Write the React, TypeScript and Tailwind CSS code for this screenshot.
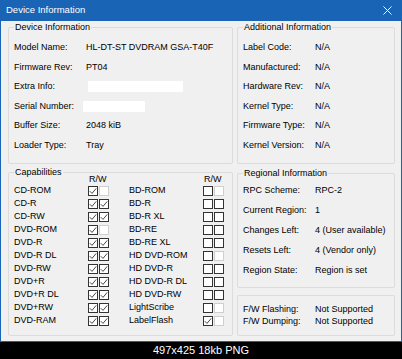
import React from "react";

const deviceRows: [string, string][] = [
  ["Model Name:", "HL-DT-ST DVDRAM GSA-T40F"],
  ["Firmware Rev:", "PT04"],
  ["Extra Info:", ""],
  ["Serial Number:", ""],
  ["Buffer Size:", "2048 kiB"],
  ["Loader Type:", "Tray"],
];

const additionalRows: [string, string][] = [
  ["Label Code:", "N/A"],
  ["Manufactured:", "N/A"],
  ["Hardware Rev:", "N/A"],
  ["Kernel Type:", "N/A"],
  ["Firmware Type:", "N/A"],
  ["Kernel Version:", "N/A"],
];

const regionalRows: [string, string][] = [
  ["RPC Scheme:", "RPC-2"],
  ["Current Region:", "1"],
  ["Changes Left:", "4 (User available)"],
  ["Resets Left:", "4 (Vendor only)"],
  ["Region State:", "Region is set"],
];

// box state: 0 = empty, 1 = checked, 2 = disabled
type Cap = [string, number, number];

const leftCaps: Cap[] = [
  ["CD-ROM", 1, 2],
  ["CD-R", 1, 1],
  ["CD-RW", 1, 1],
  ["DVD-ROM", 1, 2],
  ["DVD-R", 1, 1],
  ["DVD-R DL", 1, 1],
  ["DVD-RW", 1, 1],
  ["DVD+R", 1, 1],
  ["DVD+R DL", 1, 1],
  ["DVD+RW", 1, 1],
  ["DVD-RAM", 1, 1],
];

const rightCaps: Cap[] = [
  ["BD-ROM", 0, 2],
  ["BD-R", 0, 0],
  ["BD-R XL", 0, 0],
  ["BD-RE", 0, 0],
  ["BD-RE XL", 0, 0],
  ["HD DVD-ROM", 0, 2],
  ["HD DVD-R", 0, 0],
  ["HD DVD-R DL", 0, 0],
  ["HD DVD-RW", 0, 0],
  ["LightScribe", 0, 2],
  ["LabelFlash", 1, 2],
];

function Group({
  title,
  className = "",
  children,
}: {
  title?: string;
  className?: string;
  children: React.ReactNode;
}) {
  return (
    <div className={`relative border border-[#dcdcdc] rounded-[2px] ${className}`}>
      {title && (
        <span className="absolute -top-[6px] left-[5px] px-[1px] bg-[#f0f0f0] leading-[10px]">
          {title}
        </span>
      )}
      {children}
    </div>
  );
}

function InfoRow({ label, value, h }: { label: string; value: React.ReactNode; h: string }) {
  return (
    <div className={`flex items-center ${h}`}>
      <span className="w-[72px] shrink-0">{label}</span>
      <span className="whitespace-nowrap">{value}</span>
    </div>
  );
}

function Box({ state }: { state: number }) {
  if (state === 2) {
    return <span className="w-[10px] h-[10px] border border-[#cfcfcf] bg-white" />;
  }
  return (
    <span className="w-[10px] h-[10px] border border-[#333333] bg-white flex items-center justify-center">
      {state === 1 && (
        <svg width="8" height="8" viewBox="0 0 8 8">
          <path d="M0.8 4.2 L3 6.4 L7.2 1.4" fill="none" stroke="#333" strokeWidth="0.9" />
        </svg>
      )}
    </span>
  );
}

function CapCell({ cap }: { cap: Cap }) {
  return (
    <div className="flex items-center w-[115px] shrink-0">
      <span className="w-[74px] shrink-0 whitespace-nowrap">{cap[0]}</span>
      <span className="flex gap-[1px] shrink-0">
        <Box state={cap[1]} />
        <Box state={cap[2]} />
      </span>
    </div>
  );
}

export default function App() {
  return (
    <div
      className="w-[402px] h-[359px] bg-black flex flex-col text-[9px] text-black"
      style={{ fontFamily: '"Liberation Sans", Arial, sans-serif' }}
    >
      <div className="h-[342px] border border-t-0 border-[#1a64b6] bg-[#f0f0f0] flex flex-col">
        <div className="h-[21px] bg-[#1a64b6] flex items-center justify-between pl-[5px] pr-[9px] text-white text-[9.5px]">
          <span>Device Information</span>
          <svg width="9" height="9" viewBox="0 0 9 9">
            <path d="M0.5 0.5 L8.5 8.5 M8.5 0.5 L0.5 8.5" stroke="white" strokeWidth="1" />
          </svg>
        </div>

        <div className="grid grid-cols-[225px_158px] gap-x-[4px] pl-[7px] pt-[6px]">
          <div className="flex flex-col gap-[8px]">
            <Group title="Device Information" className="h-[137px] pl-[5px] pt-[10px]">
              {deviceRows.map(([l, v]) => {
                let value: React.ReactNode = v;
                if (l === "Extra Info:") value = <span className="block ml-[2px] w-[95px] h-[11px] bg-white" />;
                if (l === "Serial Number:") value = <span className="block -ml-[3px] w-[62px] h-[11px] bg-white" />;
                return <InfoRow key={l} label={l} value={value} h="h-[19.5px]" />;
              })}
            </Group>
            <Group title="Capabilities" className="h-[164px] pl-[5px] pt-[1.5px] overflow-visible">
              <div className="flex h-[10px] items-center">
                <span className="ml-[75px] w-[115px] shrink-0">R/W</span>
                <span>R/W</span>
              </div>
              {leftCaps.map((c, i) => (
                <div key={c[0]} className="flex h-[13px] items-center">
                  <CapCell cap={c} />
                  <CapCell cap={rightCaps[i]} />
                </div>
              ))}
            </Group>
          </div>

          <div className="flex flex-col">
            <Group title="Additional Information" className="h-[137px] pl-[5px] pt-[10px]">
              {additionalRows.map(([l, v]) => (
                <InfoRow key={l} label={l} value={v} h="h-[19.5px]" />
              ))}
            </Group>
            <Group title="Regional Information" className="mt-[9px] h-[115px] pl-[5px] pt-[7px]">
              {regionalRows.map(([l, v]) => (
                <InfoRow key={l} label={l} value={v} h="h-[20px]" />
              ))}
            </Group>
            <Group className="mt-[7px] h-[41px] pl-[5px] pt-[8px]">
              <InfoRow label="F/W Flashing:" value="Not Supported" h="h-[12px]" />
              <InfoRow label="F/W Dumping:" value="Not Supported" h="h-[12px]" />
            </Group>
          </div>
        </div>
      </div>
      <div className="flex-1 flex items-center justify-center text-white text-[11px]">
        497x425 18kb PNG
      </div>
    </div>
  );
}
